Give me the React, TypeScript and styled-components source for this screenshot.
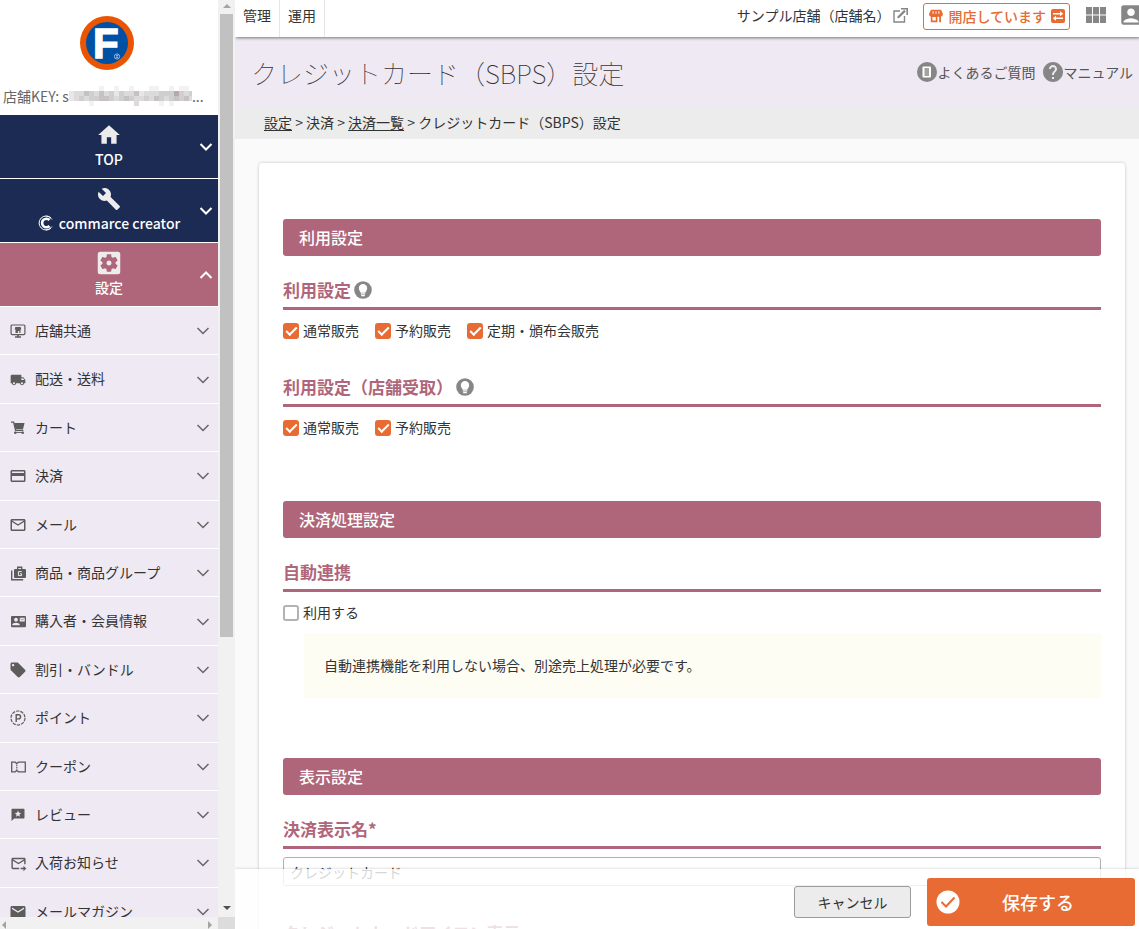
import React, { useState } from 'react';
import type { ReactNode } from 'react';
import styled, { createGlobalStyle } from 'styled-components';
import {
  MdAccountBox,
  MdBuild,
  MdContactMail,
  MdCreditCard,
  MdForwardToInbox,
  MdHelp,
  MdHome,
  MdLocalOffer,
  MdLocalShipping,
  MdMail,
  MdMailOutline,
  MdSettingsApplications,
} from 'react-icons/md';

const color = {
  navy: '#1c2b54',
  rose: '#b0667a',
  lavender: '#efe9f3',
  orange: '#e76b33',
  icon: '#868686',
  text: '#333333',
};

const GlobalStyle = createGlobalStyle`
  *, *::before, *::after { box-sizing: border-box; }
  body {
    margin: 0;
    background: #fafafa;
    color: ${color.text};
    font-family: 'Noto Sans CJK JP', 'Noto Sans', sans-serif;
    font-size: 14px;
    line-height: 22px;
  }
  button, input { font: inherit; color: inherit; }
  button { cursor: pointer; }
  svg { display: block; flex: none; }
`;

/* ---------- icons ---------- */

const Chevron = ({ up, bold }: { up?: boolean; bold?: boolean }) => (
  <svg width="14" height="10" viewBox="0 0 14 10" fill="none" stroke="currentColor" strokeWidth={bold ? 2 : 1.5}>
    <path d={up ? 'M1.5 8 7 2.5 12.5 8' : 'M1.5 2 7 7.5 12.5 2'} />
  </svg>
);

const Triangle = ({ dir }: { dir: 'up' | 'down' | 'left' | 'right' }) => {
  const d = {
    up: 'M0 6 4 2 8 6z',
    down: 'M0 2 4 6 8 2z',
    left: 'M6 0 2 4 6 8z',
    right: 'M2 0 6 4 2 8z',
  }[dir];
  return (
    <svg width="8" height="8" viewBox="0 0 8 8" fill="currentColor">
      <path d={d} />
    </svg>
  );
};

const BrandLogo = () => (
  <svg width="54" height="54" viewBox="0 0 54 54" role="img" aria-label="F">
    <circle cx="27" cy="27" r="27" fill="#ea5504" />
    <circle cx="27" cy="27" r="21" fill="#0050a4" />
    <text
      x="13"
      y="41.5"
      fill="#fff"
      stroke="#fff"
      strokeWidth="1.4"
      fontFamily="Liberation Sans, sans-serif"
      fontWeight="700"
      fontSize="42"
    >
      F
    </text>
    <circle cx="37" cy="40.500" r="2.600" fill="none" stroke="#b9d0ea" strokeWidth="0.800" />
    <path d="M36 39.500h2l-2 2h2" fill="none" stroke="#b9d0ea" strokeWidth="0.700" />
  </svg>
);

const CreatorLogo = () => (
  <svg width="15" height="16" viewBox="0 0 15 16" fill="none" stroke="#fff">
    <path d="M13 3A7 7 0 1 0 13 13" strokeWidth="1" />
    <path d="M11.500 5A4.300 4.300 0 1 0 11.500 11" strokeWidth="2.600" />
    <path d="M8 1A7 7 0 0 1 14 4.500M8 15A7 7 0 0 0 14 11.500" strokeWidth="0.900" />
  </svg>
);

const ShopIcon = () => (
  <svg width="14" height="14" viewBox="0 0 14 14" fill="currentColor" fillRule="evenodd">
    <path d="M2 .8h10L13.800 4.500v1.300c0 1-.9 1.700-1.800 1.700v5.700h-1.800V7.800H8.400v5.400H1.800V7.500C.9 7.500.2 6.800.2 5.800V4.500zM3.400 8v3.600h3.400V8zM3.600 2.300v2.400h1V2.300zM6.500 2.300v2.400h1V2.300zM9.400 2.300v2.400h1V2.300z" />
  </svg>
);

const StoreMonitorIcon = () => (
  <svg width="16" height="14" viewBox="0 0 15 14" fill="none" stroke="currentColor" strokeWidth="1.200">
    <rect x="0.600" y="1" width="13.800" height="9.600" rx="1" />
    <path d="M4.500 13h6M7.500 10.600V13" strokeWidth="1.600" />
    <path d="M4.800 3h5.400l.6 2.600h-.8V9H8.800V7H7.400v2H5V5.600h-.8z" fill="currentColor" stroke="none" />
  </svg>
);

const CartIcon = () => (
  <svg width="14" height="14" viewBox="0 0 14 14" fill="none" stroke="currentColor">
    <path d="M0 1.200h2.600L4.600 9.300h7.800" strokeWidth="1.300" />
    <path d="M3 2h10.600l-1.600 6.200H4.500z" fill="currentColor" stroke="none" />
    <path d="M3.800 11.400h8.400" strokeWidth="1" />
    <circle cx="4.300" cy="11.800" r="1.300" fill="currentColor" stroke="none" />
    <circle cx="11.700" cy="11.800" r="1.300" fill="currentColor" stroke="none" />
  </svg>
);

const ReviewIcon = () => (
  <svg width="14" height="14" viewBox="0 0 14 14" fill="currentColor" fillRule="evenodd">
    <path d="M1.500.8h11c.6 0 1 .4 1 1v7.600c0 .6-.4 1-1 1H3.200L.5 13V1.800c0-.6.4-1 1-1zM7 2.500l-.9 2.200-2.300.2 1.800 1.500-.6 2.300 2-1.200 2 1.200-.6-2.300 1.800-1.500-2.300-.2z" />
  </svg>
);

const ProductGroupIcon = () => (
  <svg width="15" height="15" viewBox="0 0 15 15" fill="none" stroke="currentColor">
    <path d="M.7 4.500v9.200h11.500" strokeWidth="1.400" />
    <path d="M6.700 3V1.200h4V3" strokeWidth="1.400" />
    <rect x="3" y="3" width="12" height="9" rx="1" fill="currentColor" stroke="none" />
    <path d="M10.700 5.600H7.400v4h3.200V7.800H9" stroke={color.lavender} strokeWidth="1" />
  </svg>
);

const PointIcon = () => (
  <svg width="16" height="16" viewBox="0 0 16 16" fill="none" stroke="currentColor">
    <circle cx="8" cy="8" r="7" strokeWidth="1.200" strokeDasharray="3.400 1" />
    <path d="M6.200 12V4.700h2.300a2 2 0 0 1 0 4.200H6.200" strokeWidth="1.400" />
  </svg>
);

const CouponIcon = () => (
  <svg width="15" height="12" viewBox="0 0 15 12" fill="none" stroke="currentColor" strokeWidth="1.300">
    <path d="M.7 1.200h3.600L5.800 2.700l1.500-1.500h7v9.600h-7L5.800 9.300l-1.500 1.500H.7z" />
    <path d="M5.800 3.800v4.600" strokeWidth="1.200" strokeDasharray="1.200 0.700" />
  </svg>
);

const ExternalIcon = () => (
  <svg width="15" height="15" viewBox="0 0 15 15" fill="none" stroke={color.icon} strokeWidth="1.400">
    <path d="M7 3H1v11h10.500V8" />
    <path d="M4.800 9.800 12 2.600" strokeWidth="2.200" />
    <path d="M8 .8h6.200V7" strokeWidth="1.600" />
  </svg>
);

const SwapIcon = () => (
  <svg width="14" height="14" viewBox="0 0 14 14">
    <rect width="14" height="14" rx="2" fill={color.orange} />
    <path d="M2 4.700h8M12 9.300H4" stroke="#fff" strokeWidth="1.400" />
    <path d="M9 2.200 12.300 4.700 9 7.200zM5 6.800 1.700 9.300 5 11.800z" fill="#fff" />
  </svg>
);

const GridIcon = () => (
  <svg width="20" height="16" viewBox="0 0 20 16" fill={color.icon}>
    {[0, 7, 14].map((x) => (
      <path key={x} d={`M${x} 0h6v7.500h-6zM${x} 8.500h6V16h-6z`} />
    ))}
  </svg>
);

const FaqIcon = () => (
  <svg width="20" height="20" viewBox="0 0 20 20">
    <circle cx="10" cy="10" r="10" fill={color.icon} />
    <path d="M6.500 4.500h6.500a1 1 0 0 1 1 1v9a1 1 0 0 1-1 1H6.500a1 1 0 0 1-1-1v-9a1 1 0 0 1 1-1z" fill="#fff" />
    <path d="M7.500 6h4.500v8H7.500z" fill="#a3a3a3" />
  </svg>
);

const BulbIcon = () => (
  <svg width="18" height="18" viewBox="0 0 18 18">
    <circle cx="9" cy="9" r="8.800" fill={color.icon} />
    <path d="M9 3a4.200 4.200 0 0 0-4.200 4.200c0 2 1.400 2.900 1.900 4.500h4.600c.5-1.600 1.900-2.500 1.900-4.500A4.200 4.200 0 0 0 9 3z" fill="#fff" />
    <path d="M6.800 12.800h4.400M7.200 14.600h3.600" stroke="#fff" strokeWidth="1.200" />
  </svg>
);

const SaveCheckIcon = () => (
  <svg width="24" height="24" viewBox="0 0 24 24">
    <circle cx="12" cy="12" r="11.500" fill="#fff" />
    <path d="M5.500 12 10 16.500 18.500 7.500" fill="none" stroke={color.orange} strokeWidth="2" />
  </svg>
);

/* Each digit is the darkness of one tile of the masked store key. */
const maskRows = [
  '0000001001001000110010110',
  '2335435342433523334446434',
  '2343445543454334354345453',
  '0000100000000300001010000',
];
const maskShades = ['#ffffff', '#f2f2f2', '#e8e6e6', '#dcdada', '#cfcfd1', '#c6c2c1', '#b8a9a7'];

const KeyMask = () => (
  <svg width="123" height="20" viewBox="0 0 123 20" shapeRendering="crispEdges" aria-hidden="true">
    {maskRows.map((row, y) =>
      row.split('').map((shade, x) => (
        <rect key={`${x}-${y}`} x={x * 5} y={y * 5} width="5" height="5" fill={maskShades[Number(shade)]} />
      )),
    )}
  </svg>
);

/* ---------- sidebar ---------- */

const Page = styled.div`
  display: grid;
  grid-template-columns: 235px minmax(0, 1fr);
  height: 100vh;
  overflow: hidden;
`;

const Sidebar = styled.aside`
  display: grid;
  grid-template: minmax(0, 1fr) 12px / minmax(0, 1fr) 17px;
  min-height: 0;
  background: #fff;
`;

const SidebarBody = styled.div`
  overflow: hidden;
`;

const Brand = styled.div`
  display: flex;
  flex-direction: column;
  align-items: center;
  height: 115px;
  padding: 16px 4px 0 0;
`;

const StoreKey = styled.p`
  display: flex;
  align-self: stretch;
  align-items: center;
  margin: 15px 0 0 3px;
  color: #666;
  white-space: pre;
`;

const MainMenuButton = styled.button<{ $active?: boolean }>`
  display: grid;
  grid-template-columns: 24px 1fr 24px;
  align-items: center;
  width: 100%;
  height: 64px;
  padding: 0;
  border: 0;
  border-bottom: 1px solid #fff;
  background: ${(p) => (p.$active ? color.rose : color.navy)};
  color: #fff;

  > svg { justify-self: center; }
`;

const MainMenuLabel = styled.span`
  display: grid;
  grid-template-rows: 26px 22px;
  grid-column: 2;
  place-items: center;
  padding-bottom: 2px;
  font-weight: 500;

  > svg { color: #ececec; }
`;

const LabelText = styled.span`
  display: flex;
  align-items: center;
  gap: 6px;
`;

const SubMenu = styled.ul`
  margin: 0;
  padding: 0;
  list-style: none;
`;

const SubMenuButton = styled.button`
  display: flex;
  align-items: center;
  width: 100%;
  padding: 12px 8px 11px 9px;
  border: 0;
  border-bottom: 1px solid #fff;
  background: ${color.lavender};
  color: ${color.text};
  line-height: 1.6;
  text-align: left;

  > svg { color: #666; }
`;

const SubMenuIcon = styled.span`
  display: flex;
  justify-content: center;
  width: 18px;
  margin-right: 8px;
  color: #5c5c5c;
`;

const SubMenuText = styled.span`
  flex: 1;
  padding-bottom: 2px;
`;

const ScrollTrack = styled.div<{ $horizontal?: boolean }>`
  display: flex;
  flex-direction: ${(p) => (p.$horizontal ? 'row' : 'column')};
  align-items: center;
  justify-content: space-between;
  padding: ${(p) => (p.$horizontal ? '4px 4px 0 0' : '2px 0 5px')};
  background: #f1f1f1;
  color: ${(p) => (p.$horizontal ? '#a3a3a3' : '#505050')};
`;

const ScrollRange = styled.div`
  flex: 1;
  margin-top: 4px;
`;

const ScrollThumb = styled.div`
  width: 13px;
  height: 70%;
  background: #c1c1c1;
`;

const ScrollUp = styled.span`
  color: #a3a3a3;
`;

const ScrollCorner = styled.div`
  background: #dcdcdc;
`;

/* ---------- main column ---------- */

const Main = styled.div`
  position: relative;
  display: flex;
  flex-direction: column;
  min-width: 0;
  min-height: 0;
  overflow: hidden;
`;

const TopBar = styled.header`
  z-index: 1;
  display: flex;
  flex: none;
  height: 37px;
  background: #fff;
  box-shadow: 1px 1px 3px rgba(0, 0, 0, 0.5);
`;

const TopTab = styled.a`
  padding: 4px 8px 0;
  border-right: 1px solid #e6e6e6;
  color: ${color.text};
  text-decoration: none;
`;

const TopTools = styled.div`
  display: flex;
  align-items: center;
  height: 32px;
  margin: 0 -5px 0 auto;
`;

const StoreLink = styled.a`
  display: flex;
  align-items: center;
  gap: 3px;
  margin-right: 15px;
  padding-bottom: 2px;
  color: ${color.text};
  text-decoration: none;
`;

const OpenStatusButton = styled.button`
  display: flex;
  align-items: center;
  gap: 5px;
  height: 27px;
  padding: 0 4px 0 5px;
  border: 1px solid ${color.orange};
  border-radius: 3px;
  background: #fff;
  color: ${color.orange};
  font-weight: 500;
  white-space: nowrap;
`;

const ToolButton = styled.button`
  display: flex;
  margin-left: 12px;
  padding: 0 0 2px;
  border: 0;
  background: none;
  color: ${color.icon};

  &:nth-last-child(2) { margin-left: 16px; }
`;

const TitleBar = styled.div`
  display: flex;
  flex: none;
  align-items: center;
  justify-content: space-between;
  height: 70px;
  padding: 0 6px 0 16px;
  background: ${color.lavender};
`;

const PageTitle = styled.h1`
  margin: 2px 0 0;
  font-size: 26px;
  font-weight: 100;
  line-height: 38px;
`;

const HelpLinks = styled.nav`
  display: flex;
  gap: 8px;
`;

const HelpLink = styled.a`
  display: flex;
  align-items: center;
  color: #555;
  text-decoration: none;

  > svg { color: ${color.icon}; }
`;

const HelpGlyph = styled(MdHelp)`
  margin: 0 -2px;
`;

const Breadcrumb = styled.nav`
  flex: none;
  padding: 4px 29px 6px;
  background: #ececec;

  a { color: inherit; text-underline-offset: 2px; }
`;

const Card = styled.main`
  margin: 24px 14px 0 24px;
  padding: 56px 24px;
  border-radius: 3px;
  background: #fff;
  box-shadow: 0 0 3px rgba(0, 0, 0, 0.25);
`;

const Section = styled.section`
  & + & { margin-top: 60px; }
`;

const SectionTitle = styled.h2`
  margin: 0 0 22px;
  padding: 0 16px;
  border-radius: 3px;
  background: ${color.rose};
  color: #fff;
  font-size: 16px;
  font-weight: 500;
  line-height: 37px;
`;

const FieldBlock = styled.div`
  & + & { margin-top: 31px; }
`;

const FieldTitle = styled.h3`
  display: flex;
  align-items: center;
  gap: 3px;
  margin: 0 0 8px;
  padding-bottom: 5px;
  border-bottom: 3px solid ${color.rose};
  color: ${color.rose};
  font-size: 17px;
  font-weight: 700;
  line-height: 24px;
`;

const HintButton = styled.button`
  padding: 0;
  border: 0;
  background: none;
`;

const CheckRow = styled.div`
  display: flex;
  flex-wrap: wrap;
  gap: 0 16px;
`;

const CheckLabel = styled.label`
  display: flex;
  align-items: center;
  gap: 4px;
  line-height: 24px;
`;

const CheckText = styled.span`
  padding-bottom: 2px;
`;

const CheckInput = styled.input`
  display: grid;
  place-items: center;
  width: 16px;
  height: 16px;
  margin: 0;
  border: 2px solid #b3b3b3;
  border-radius: 3px;
  background: #fff;
  appearance: none;

  &:checked {
    border-color: ${color.orange};
    background: ${color.orange};
  }

  &:checked::after {
    content: '';
    width: 11px;
    height: 6px;
    margin-bottom: 3px;
    border: solid #fff;
    border-width: 0 0 2px 2px;
    transform: rotate(-45deg);
  }
`;

const Note = styled.p`
  margin: 7px 0 0 21px;
  padding: 20px;
  background: #fdfdf3;
  line-height: 25px;
`;

const TextInput = styled.input`
  display: block;
  width: 100%;
  height: 29px;
  margin-bottom: 35px;
  padding: 0 6px;
  border: 1px solid #b0b0b0;
  border-radius: 3px;
  background: #fff;
`;

const ActionBar = styled.footer`
  position: absolute;
  right: 0;
  bottom: 0;
  left: 0;
  display: flex;
  align-items: center;
  justify-content: flex-end;
  gap: 16px;
  height: 60px;
  padding: 6px 4px 0;
  background: rgba(255, 255, 255, 0.8);
  box-shadow: 0 0 3px rgba(0, 0, 0, 0.2);
`;

const CancelButton = styled.button`
  width: 117px;
  height: 32px;
  padding: 0;
  border: 1px solid #9b9b9b;
  border-radius: 3px;
  background: #ececec;
`;

const SaveButton = styled.button`
  display: flex;
  align-items: center;
  width: 208px;
  height: 48px;
  padding: 0 19px 0 9px;
  border: 0;
  border-radius: 3px;
  background: ${color.orange};
  color: #fff;
  font-size: 18px;
  font-weight: 500;
`;

const SaveText = styled.span`
  flex: 1;
`;

const subMenuItems: { label: string; icon: ReactNode }[] = [
  { label: '店舗共通', icon: <StoreMonitorIcon /> },
  { label: '配送・送料', icon: <MdLocalShipping size={16} /> },
  { label: 'カート', icon: <CartIcon /> },
  { label: '決済', icon: <MdCreditCard size={18} /> },
  { label: 'メール', icon: <MdMailOutline size={18} /> },
  { label: '商品・商品グループ', icon: <ProductGroupIcon /> },
  { label: '購入者・会員情報', icon: <MdContactMail size={15} /> },
  { label: '割引・バンドル', icon: <MdLocalOffer size={18} /> },
  { label: 'ポイント', icon: <PointIcon /> },
  { label: 'クーポン', icon: <CouponIcon /> },
  { label: 'レビュー', icon: <ReviewIcon /> },
  { label: '入荷お知らせ', icon: <MdForwardToInbox size={17} /> },
  { label: 'メールマガジン', icon: <MdMail size={18} /> },
];

const Check = ({ label, on }: { label: string; on?: boolean }) => {
  const [checked, setChecked] = useState(Boolean(on));
  return (
    <CheckLabel>
      <CheckInput type="checkbox" checked={checked} onChange={(e) => setChecked(e.target.checked)} />
      <CheckText>{label}</CheckText>
    </CheckLabel>
  );
};

const Hint = () => (
  <HintButton type="button" aria-label="ヒント">
    <BulbIcon />
  </HintButton>
);

export default function App() {
  return (
    <>
      <GlobalStyle />
      <Page>
        <Sidebar>
          <SidebarBody>
            <Brand>
              <BrandLogo />
              <StoreKey>
                店舗KEY: s<KeyMask />...
              </StoreKey>
            </Brand>
            <MainMenuButton type="button">
              <MainMenuLabel>
                <MdHome size={26} />
                <LabelText>TOP</LabelText>
              </MainMenuLabel>
              <Chevron bold />
            </MainMenuButton>
            <MainMenuButton type="button">
              <MainMenuLabel>
                <MdBuild size={24} />
                <LabelText>
                  <CreatorLogo />
                  commarce creator
                </LabelText>
              </MainMenuLabel>
              <Chevron bold />
            </MainMenuButton>
            <MainMenuButton type="button" $active aria-expanded="true">
              <MainMenuLabel>
                <MdSettingsApplications size={30} />
                <LabelText>設定</LabelText>
              </MainMenuLabel>
              <Chevron up bold />
            </MainMenuButton>
            <SubMenu>
              {subMenuItems.map((item) => (
                <li key={item.label}>
                  <SubMenuButton type="button">
                    <SubMenuIcon>{item.icon}</SubMenuIcon>
                    <SubMenuText>{item.label}</SubMenuText>
                    <Chevron />
                  </SubMenuButton>
                </li>
              ))}
            </SubMenu>
          </SidebarBody>
          <ScrollTrack>
            <ScrollUp>
              <Triangle dir="up" />
            </ScrollUp>
            <ScrollRange>
              <ScrollThumb />
            </ScrollRange>
            <Triangle dir="down" />
          </ScrollTrack>
          <ScrollTrack $horizontal>
            <Triangle dir="left" />
            <Triangle dir="right" />
          </ScrollTrack>
          <ScrollCorner />
        </Sidebar>

        <Main>
          <TopBar>
            <TopTab href="#manage">管理</TopTab>
            <TopTab href="#operate">運用</TopTab>
            <TopTools>
              <StoreLink href="#store">
                サンプル店舗（店舗名）
                <ExternalIcon />
              </StoreLink>
              <OpenStatusButton type="button">
                <ShopIcon />
                開店しています
                <SwapIcon />
              </OpenStatusButton>
              <ToolButton type="button" aria-label="アプリ一覧">
                <GridIcon />
              </ToolButton>
              <ToolButton type="button" aria-label="アカウント">
                <MdAccountBox size={26} />
              </ToolButton>
            </TopTools>
          </TopBar>
          <TitleBar>
            <PageTitle>クレジットカード（SBPS）設定</PageTitle>
            <HelpLinks>
              <HelpLink href="#faq">
                <FaqIcon />
                よくあるご質問
              </HelpLink>
              <HelpLink href="#manual">
                <HelpGlyph size={24} />
                マニュアル
              </HelpLink>
            </HelpLinks>
          </TitleBar>
          <Breadcrumb>
            <a href="#settings">設定</a> &gt; 決済 &gt; <a href="#payments">決済一覧</a> &gt; クレジットカード（SBPS）設定
          </Breadcrumb>

          <Card>
            <Section>
              <SectionTitle>利用設定</SectionTitle>
              <FieldBlock>
                <FieldTitle>
                  利用設定
                  <Hint />
                </FieldTitle>
                <CheckRow>
                  <Check label="通常販売" on />
                  <Check label="予約販売" on />
                  <Check label="定期・頒布会販売" on />
                </CheckRow>
              </FieldBlock>
              <FieldBlock>
                <FieldTitle>
                  利用設定（店舗受取）
                  <Hint />
                </FieldTitle>
                <CheckRow>
                  <Check label="通常販売" on />
                  <Check label="予約販売" on />
                </CheckRow>
              </FieldBlock>
            </Section>
            <Section>
              <SectionTitle>決済処理設定</SectionTitle>
              <FieldBlock>
                <FieldTitle>自動連携</FieldTitle>
                <CheckRow>
                  <Check label="利用する" />
                </CheckRow>
                <Note>自動連携機能を利用しない場合、別途売上処理が必要です。</Note>
              </FieldBlock>
            </Section>
            <Section>
              <SectionTitle>表示設定</SectionTitle>
              <FieldBlock>
                <FieldTitle>
                  <label htmlFor="payment-name">決済表示名*</label>
                </FieldTitle>
                <TextInput id="payment-name" type="text" defaultValue="クレジットカード" />
              </FieldBlock>
              <FieldBlock>
                <FieldTitle>クレジットカードアイコン表示</FieldTitle>
              </FieldBlock>
            </Section>
          </Card>

          <ActionBar>
            <CancelButton type="button">キャンセル</CancelButton>
            <SaveButton type="button">
              <SaveCheckIcon />
              <SaveText>保存する</SaveText>
            </SaveButton>
          </ActionBar>
        </Main>
      </Page>
    </>
  );
}
